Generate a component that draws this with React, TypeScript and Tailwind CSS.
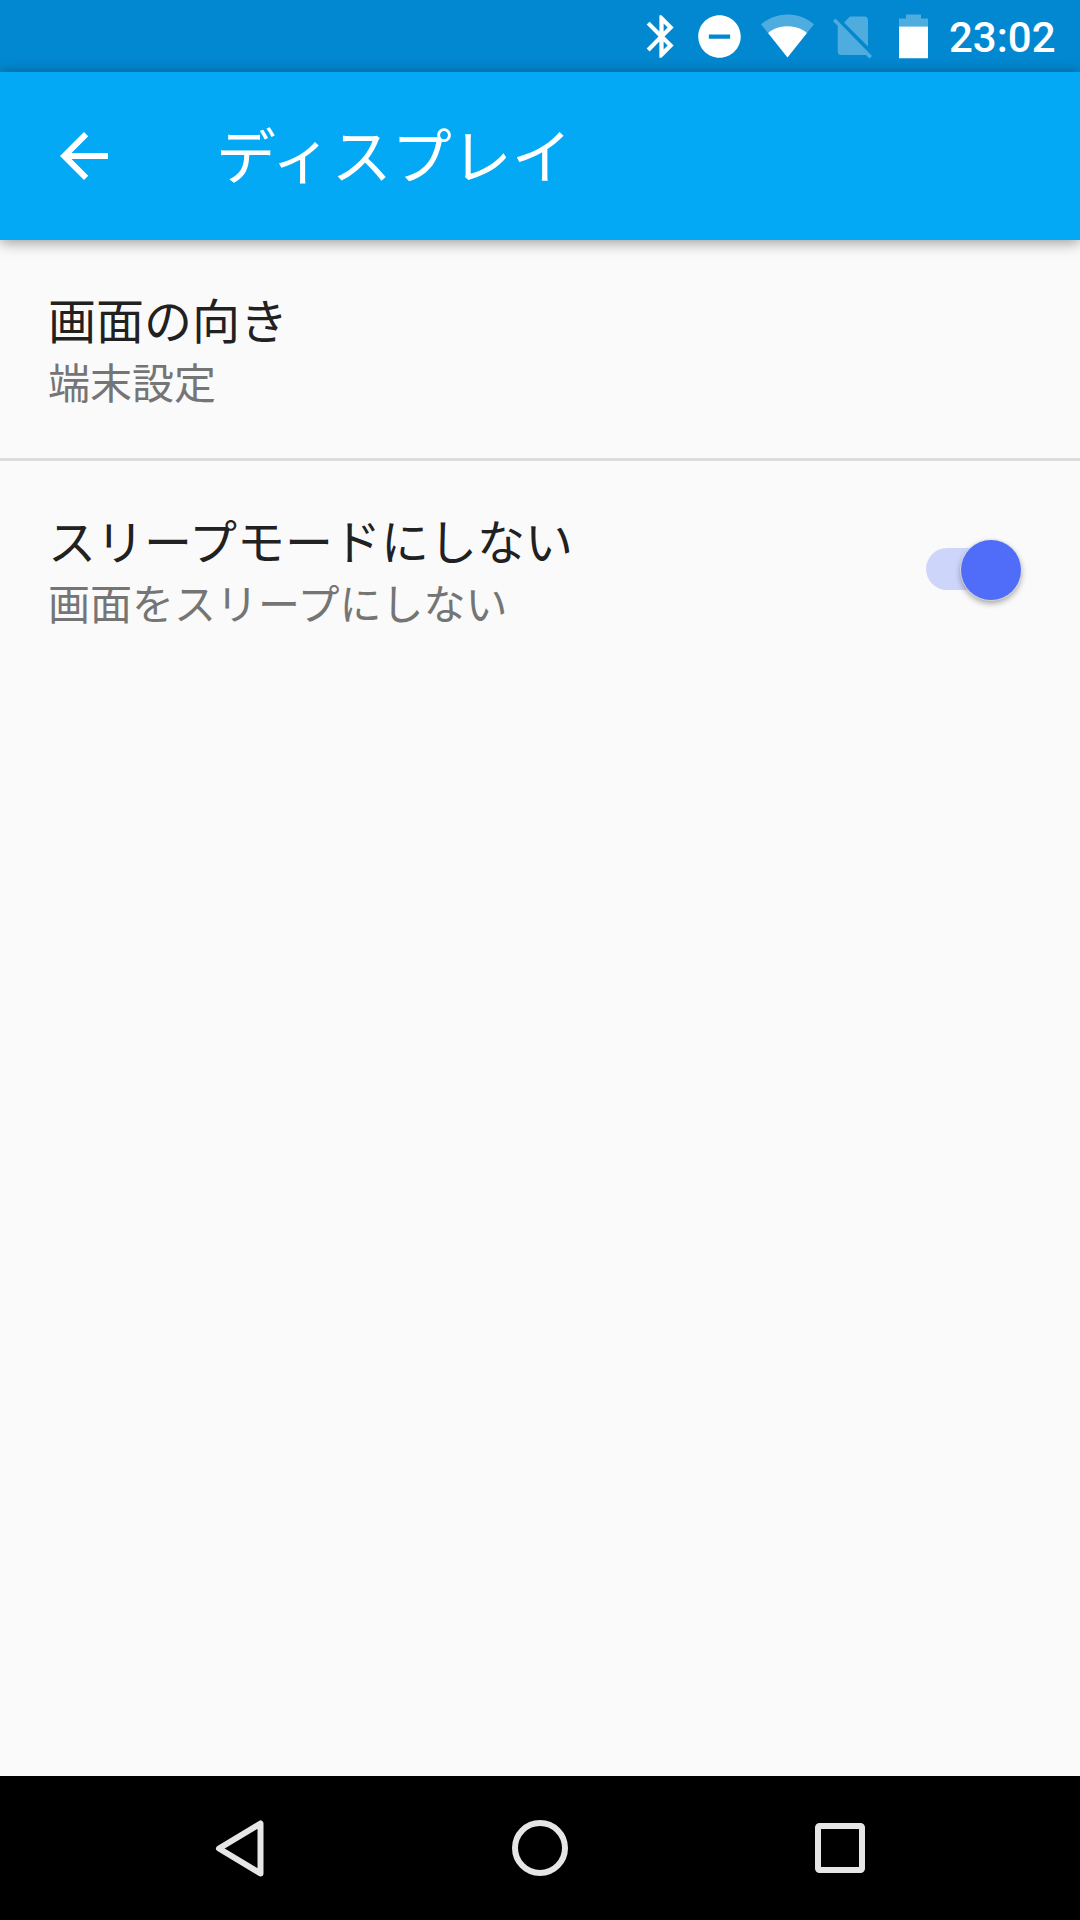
import type { ReactNode } from 'react'

interface SettingItemProps {
  title: string
  summary: string
  children?: ReactNode
}

function StatusBar() {
  return (
    <div className="flex h-[72px] items-center justify-end bg-[#0288d1] pr-6 text-white">
      {/* Bluetooth */}
      <svg className="mr-[7px] h-[51px] w-[51px]" viewBox="0 0 24 24" fill="currentColor">
        <path d="M17.71 7.71L12 2h-1v7.59L6.41 5 5 6.41 10.59 12 5 17.59 6.41 19 11 14.41V22h1l5.71-5.71-4.3-4.29 4.3-4.29zM13 5.83l1.88 1.88L13 9.59V5.83zm1.88 10.46L13 18.17v-3.76l1.88 1.88z" />
      </svg>
      {/* Do not disturb */}
      <svg className="mr-4 h-[51px] w-[51px]" viewBox="0 0 24 24" fill="currentColor">
        <path d="M12 2C6.48 2 2 6.48 2 12s4.48 10 10 10 10-4.48 10-10S17.52 2 12 2zm5 11H7v-2h10v2z" />
      </svg>
      {/* Wi-Fi */}
      <svg className="mr-[18px] h-[51px] w-[54px]" viewBox="0 0 54 51" fill="currentColor">
        <path d="M26.5 46.5L46 22C41.5 18 34.5 15.3 26.500 15.300S11.500 18 7 22z" />
        <path d="M7 22L0 13.300C5.500 8.500 15 3.500 26.500 3.500s21 5 26.500 9.800l-7 8.700C41.500 18 34.500 15.300 26.500 15.300S11.500 18 7 22z" opacity=".3" />
      </svg>
      {/* No SIM */}
      <svg className="mr-[25px] h-[51px] w-[41px]" viewBox="0 0 41 51" fill="currentColor" opacity=".3">
        <path d="M11 11.5L17 5.5H31.5Q35 5.500 35 9V35.500z" />
        <path d="M2.500 7.500L0 10 4.700 14.700V40.500Q4.700 44 8.200 44H33L36.500 47.500 39 45z" />
      </svg>
      {/* Battery */}
      <svg className="mr-[21px] h-[51px] w-[29px]" viewBox="0 0 29 51" fill="currentColor">
        <path d="M7 3.500h15v4h7v8H0v-8h7z" opacity=".3" />
        <path d="M0 15.500h29v31.700H0z" />
      </svg>
      <span className="mt-0.5 w-[107px] whitespace-nowrap font-[Roboto,sans-serif] text-[42px] leading-[49px] font-medium">23:02</span>
    </div>
  )
}

function AppBar() {
  return (
    <header className="relative flex h-[168px] items-center bg-[#03a9f4] pl-12 text-white shadow-[0_2px_14px_rgba(0,0,0,0.42)]">
      <svg className="h-[72px] w-[72px]" viewBox="0 0 24 24" fill="currentColor">
        <path d="M20 11H7.830l5.590-5.590L12 4l-8 8 8 8 1.410-1.410L7.830 13H20v-2z" />
      </svg>
      <h1 className="mb-1.5 ml-24 text-[60px] leading-[88px]">ディスプレイ</h1>
    </header>
  )
}

function Switch() {
  return (
    <div className="relative h-[60px] w-[96px]">
      <div className="absolute top-2 left-0 h-[42px] w-[84px] rounded-full bg-[#cdd5fb]" />
      <div className="absolute top-0 right-px h-[60px] w-[60px] rounded-full bg-[#506dfa] shadow-[0_0_0_1px_rgba(225,225,230,0.7),0_3px_6px_rgba(0,0,0,0.38)]" />
    </div>
  )
}

function SettingItem({ title, summary, children }: SettingItemProps) {
  return (
    <div className="flex h-[218px] items-center justify-between pr-[58px] pl-12">
      <div className="pb-[3px]">
        <div className="mb-[3px] text-[48px] leading-[64px] text-[#212121]">{title}</div>
        <div className="text-[42px] leading-[56px] text-[#757575]">{summary}</div>
      </div>
      {children}
    </div>
  )
}

function NavigationBar() {
  return (
    <nav className="flex h-36 items-center justify-center bg-black text-[#e6e6e6]">
      <svg className="h-36 w-[300px]" viewBox="0 0 300 144" fill="none" stroke="currentColor" strokeWidth="6" strokeLinejoin="round">
        <path d="M129 72.500L170.500 47.500V97.500z" />
      </svg>
      <svg className="h-36 w-[300px]" viewBox="0 0 300 144" fill="none" stroke="currentColor" strokeWidth="6">
        <circle cx="150" cy="72" r="25" />
      </svg>
      <svg className="h-36 w-[300px]" viewBox="0 0 300 144" fill="none" stroke="currentColor" strokeWidth="6">
        <rect x="128" y="50" width="44" height="44" rx="1.500" />
      </svg>
    </nav>
  )
}

export default function App() {
  return (
    <div className="flex h-[1920px] w-[1080px] flex-col overflow-hidden bg-[#fafafa] font-['Noto_Sans_CJK_JP',sans-serif]">
      <StatusBar />
      <AppBar />
      <main className="flex-1">
        <SettingItem title="画面の向き" summary="端末設定" />
        <div className="h-[3px] bg-[#dcdcdc]" />
        <SettingItem title="スリープモードにしない" summary="画面をスリープにしない">
          <Switch />
        </SettingItem>
      </main>
      <NavigationBar />
    </div>
  )
}
